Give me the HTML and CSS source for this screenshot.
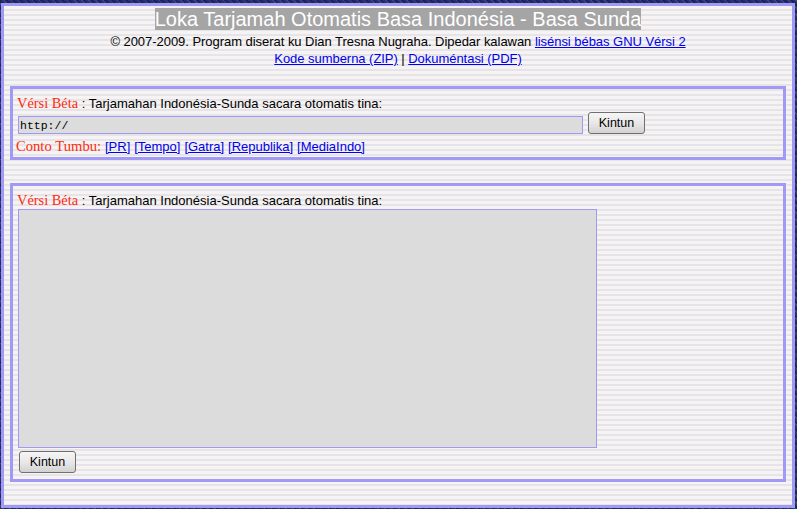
FILE: index.html
```html
<!DOCTYPE html>
<html lang="id">
<head>
    <meta charset="UTF-8">
    <title>Loka Tarjamah Otomatis Basa Indonésia - Basa Sunda</title>
    <link rel="stylesheet" href="styles.css">
</head>
<body>
    <div class="page">
        <div class="header">
            <h1><span class="title">Loka Tarjamah Otomatis Basa Indonésia - Basa Sunda</span></h1>
            <p>© 2007-2009. Program diserat ku Dian Tresna Nugraha. Dipedar kalawan <a href="#">lisénsi bébas GNU Vérsi 2</a></p>
            <p><a href="#">Kode sumberna (ZIP)</a> | <a href="#">Dokuméntasi (PDF)</a></p>
        </div>

        <form class="section section-url">
            <div class="label"><span class="beta">Vérsi Béta</span> : Tarjamahan Indonésia-Sunda sacara otomatis tina:</div>
            <div class="url-row">
                <input class="url-input" type="text" value="http://">
                <button class="btn" type="button">Kintun</button>
            </div>
            <div class="samples">
                <span class="beta">Conto Tumbu:</span>
                <a href="#">[PR]</a>
                <a href="#">[Tempo]</a>
                <a href="#">[Gatra]</a>
                <a href="#">[Republika]</a>
                <a href="#">[MediaIndo]</a>
            </div>
        </form>

        <form class="section section-text">
            <div class="label"><span class="beta">Vérsi Béta</span> : Tarjamahan Indonésia-Sunda sacara otomatis tina:</div>
            <textarea class="text-input"></textarea>
            <button class="btn" type="button">Kintun</button>
        </form>
    </div>
</body>
</html>
```

FILE: styles.css
```css
html, body {
    height: 100%;
}
body {
    box-sizing: border-box;
    margin: 0;
    padding: 3px 0 0 1px;
    font-family: "Liberation Sans", Arial, sans-serif;
    font-size: 13px;
    color: #000;
    background: repeating-linear-gradient(45deg, #27306b 0, #27306b 2px, #3c4488 2px, #3c4488 3px, #1d2558 3px, #1d2558 5px);
    overflow: hidden;
}
a {
    color: #0000ee;
}
.page {
    box-sizing: border-box;
    width: 794px;
    height: 505px;
    padding: 2px 6px 0 6px;
    border: 3px solid #a09af5;
    background: repeating-linear-gradient(to bottom, #f5f3f3 0, #f5f3f3 3px, #e6e4e6 3px, #e6e4e6 5px);
}
.header {
    text-align: center;
    line-height: 17px;
}
.header p {
    margin: 0;
    letter-spacing: -0.04px;
}
h1 {
    margin: 0 0 2px;
    font-size: 20px;
    font-weight: normal;
    line-height: 23px;
}
.title {
    color: #fff;
    background-color: #a5a5a5;
}
.section {
    box-sizing: border-box;
    border: 3px solid #a09af5;
    padding: 6px 3px 0 3px;
}
.section-url {
    height: 74px;
    margin-top: 19px;
}
.section-text {
    height: 299px;
    margin-top: 23px;
}
.label {
    margin-left: 1px;
    line-height: 17px;
}
.beta {
    font-family: "Liberation Serif", "Times New Roman", serif;
    font-size: 14.4px;
    color: #ff2a10;
}
.url-row {
    display: flex;
    align-items: flex-end;
    margin-left: 2px;
    gap: 5px;
}
.url-input {
    box-sizing: border-box;
    width: 565px;
    height: 18px;
    padding: 0 1px;
    border: 1px solid #a09af5;
    background: #dcdcdc;
    font-family: "Liberation Mono", "Courier New", monospace;
    font-size: 11.5px;
    outline: none;
}
.btn {
    box-sizing: border-box;
    width: 57px;
    height: 22px;
    padding: 0;
    border: 1px solid #707070;
    border-radius: 3px;
    background: linear-gradient(to bottom, #f6f6f6 0, #e8e8e8 50%, #d2d2d2 100%);
    font-family: "Liberation Sans", Arial, sans-serif;
    font-size: 12.5px;
    color: #000;
}
.samples {
    margin-top: 4px;
    line-height: 17px;
    word-spacing: 0.3px;
}
.samples .beta {
    font-size: 14.6px;
}
.text-input {
    display: block;
    box-sizing: border-box;
    width: 579px;
    height: 239px;
    margin: 0 0 3px 2px;
    padding: 1px;
    border: 1px solid #a09af5;
    background: #dcdcdc;
    resize: none;
    outline: none;
}
.section-text .btn {
    display: block;
    margin-left: 3px;
}
```
